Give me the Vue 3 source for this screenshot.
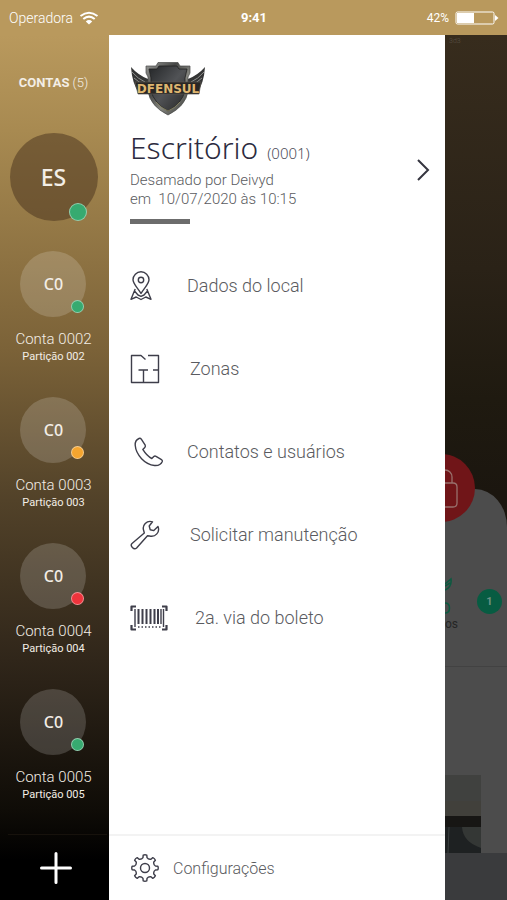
<template>
  <div class="screen">
    <header class="status-bar">
      <div class="carrier">
        <span>Operadora</span>
        <svg class="wifi" viewBox="0 0 20 14" aria-hidden="true">
          <path d="M1.5 5 Q10 -1.6 18.5 5" />
          <path d="M4.3 8 Q10 3.2 15.7 8" />
          <path class="solid" d="M6.8 10.4 Q10 7.6 13.2 10.4 L10 13.4 Z" />
        </svg>
      </div>
      <time class="clock">9:41</time>
      <div class="battery">
        <span>42%</span>
        <svg class="battery-icon" viewBox="0 0 44 14" aria-hidden="true">
          <rect x="1" y="1" width="38" height="12" rx="1.5" />
          <rect class="solid" x="2" y="2" width="17" height="10" />
          <path class="solid" d="M40 4 L43.5 7 L40 10 Z" />
        </svg>
      </div>
    </header>

    <div class="body">
      <nav class="accounts" aria-label="Contas">
        <h2 class="accounts-title"><strong>CONTAS</strong> ({{ accounts.length + 1 }})</h2>
        <button class="avatar current" aria-label="Escritório">
          ES
          <span class="dot green" />
        </button>
        <ul class="account-list">
          <li v-for="a in accounts" :key="a.id">
            <button class="account">
              <span class="avatar">C0<span class="dot" :class="a.state" /></span>
              <span class="account-name">Conta {{ a.id }}</span>
              <span class="account-part">Partição {{ a.part }}</span>
            </button>
          </li>
        </ul>
        <div class="add-row">
          <button class="add" aria-label="Adicionar conta">
            <svg viewBox="0 0 32 32"><path d="M16 1.5 V30.5 M1.5 16 H30.5" /></svg>
          </button>
        </div>
      </nav>

      <main class="drawer">
        <svg class="logo" viewBox="0 0 76 56" role="img" aria-label="Dfensul">
          <defs>
            <linearGradient id="steel" x1="0" y1="0" x2="1" y2="1">
              <stop offset="0" stop-color="#9a9b98" />
              <stop offset="0.35" stop-color="#454645" />
              <stop offset="0.6" stop-color="#858680" />
              <stop offset="1" stop-color="#2d2e2d" />
            </linearGradient>
            <linearGradient id="plate" x1="0" y1="0" x2="1" y2="1">
              <stop offset="0" stop-color="#242628" />
              <stop offset="0.5" stop-color="#515356" />
              <stop offset="1" stop-color="#252525" />
            </linearGradient>
          </defs>
          <path class="wing" d="M1 6 Q8 14 18 18 V32 H9 Q2 22 1 6 Z" />
          <path class="wing" d="M75 6 Q68 14 58 18 V32 H67 Q74 22 75 6 Z" />
          <path class="feather" d="M2 11 Q8 18 15 21 M4 17 Q9 22 16 24 M74 11 Q68 18 61 21 M72 17 Q67 22 60 24" />
          <path fill="url(#steel)" stroke="#484947" stroke-width="0.7" d="M16 5 L26 5 L28 1.5 H48 L50 5 L60 5 V12 L58 16 V30 Q56 45 38 54 Q20 45 18 30 V16 L16 12 Z" />
          <path fill="url(#plate)" stroke="#222" stroke-width="0.8" d="M19 8 H27 L29 5 H47 L49 8 H57 L55 17 V30 Q52 42 38 50 Q24 42 21 30 V17 Z" />
          <path fill="none" stroke="#8c8862" stroke-width="0.8" d="M26 41 Q31 47 38 50 Q45 47 50 41" />
          <path fill="#292725" stroke="#5b5750" stroke-width="0.7" d="M5 21 H71 L69 33 H8 Z" />
          <text x="38" y="31.500" text-anchor="middle">DFENSUL</text>
        </svg>

        <button class="site">
          <span class="site-text">
            <span class="site-head">
              <span class="site-name">Escritório</span>
              <span class="site-code">(0001)</span>
            </span>
            <span class="site-info">Desamado por Deivyd<br>em &nbsp;10/07/2020 às 10:15</span>
          </span>
          <svg class="chevron" viewBox="0 0 14 24"><path d="M2 2 L12 12 L2 22" /></svg>
        </button>
        <div class="rule" />

        <ul class="menu">
          <li>
            <a href="#" class="menu-item">
              <span class="icon">
                <svg width="22" height="30" viewBox="0 0 22 30">
                  <path d="M11 22.5 C8 17 3 13 3 8.8 A8 8 0 0 1 19 8.8 C19 13 14 17 11 22.5 Z" />
                  <circle cx="11" cy="9" r="2.7" />
                  <path d="M5.2 18 L1 28.3 L6.2 26 L11 28.5 L15.8 26 L21 28.3 L16.8 18 M4.5 20 L8 24 L11 25.4 L14 24 L17.5 20" />
                </svg>
              </span>
              Dados do local
            </a>
          </li>
          <li>
            <a href="#" class="menu-item">
              <span class="icon wide">
                <svg width="30" height="30" viewBox="0 0 30 30">
                  <path d="M18 1.5 H28.5 V28.5 H1.5 V1.5 H11 L15.5 5.5 M8.5 16 H18 M13.5 16 V28.5 M23 16 H28.5" />
                </svg>
              </span>
              Zonas
            </a>
          </li>
          <li>
            <a href="#" class="menu-item">
              <span class="icon">
                <svg width="34" height="30" viewBox="0 0 34 30">
                  <path d="M9 1.5 C6.5 2.5 5 5 5.2 8.3 C6 18 15 27.5 24.5 28.5 C28 28.8 31 27.5 32.3 24.5 C32.5 23.8 32.2 23 31.5 22.6 L26 19.3 C25.2 18.9 24.4 19 23.8 19.6 L21.8 21.6 C18 19.5 15.5 16.8 12.8 12.4 L14.8 10.4 C15.5 9.7 15.5 9 15.2 8.2 L11.3 2.2 C10.7 1.4 10 1.1 9 1.5 Z" />
                </svg>
              </span>
              Contatos e usuários
            </a>
          </li>
          <li>
            <a href="#" class="menu-item">
              <span class="icon wide">
                <svg width="30" height="30" viewBox="0 0 30 30">
                  <path d="M22.5 1.8 C17 0 11.5 5 13.8 11 L14.3 13 L2 23.5 C-0.3 25.8 3.8 30.3 6.6 28 L17.5 15.8 L19.5 16 C25.5 17.5 30.2 12 28 6.5 L23.8 10.6 L20.2 9.8 L19.2 6 Z" />
                </svg>
              </span>
              Solicitar manutenção
            </a>
          </li>
          <li>
            <a href="#" class="menu-item">
              <span class="icon widest">
                <svg width="38" height="26" viewBox="0 0 38 26">
                  <path class="frame" d="M1.5 6 V1.5 H6 M32 1.5 H36.5 V6 M36.5 20 V24.5 H32 M6 24.5 H1.5 V20" />
                  <path d="M5 4 V22 M33.500 4 V22" />
                  <path class="bars" d="M8.500 4 V19 M12.500 4 V19 M16.500 4 V19 M20.500 4 V19 M24.500 4 V19 M28 4 V19" />
                  <path d="M31 4 V19" />
                  <path stroke-dasharray="1.5 2" d="M8 22 H31" />
                </svg>
              </span>
              2a. via do boleto
            </a>
          </li>
        </ul>

        <footer class="drawer-footer">
          <a href="#" class="settings">
            <svg width="28" height="28" viewBox="0 0 28 28">
              <path :d="gearPath" />
              <circle cx="14" cy="14" r="4.5" />
            </svg>
            Configurações
          </a>
        </footer>
      </main>

      <aside class="backdrop" aria-hidden="true">
        <div class="hero"><span class="hero-note">3d3</span></div>
        <div class="lock">
          <svg width="22" height="40" viewBox="0 0 22 40">
            <path d="M-7 14 V8 A7 7 0 0 1 7 8 V14 M-12 14 H8 Q12 14 12 18 V34 Q12 38 8 38 H-12" />
          </svg>
        </div>
        <div class="sheet">
          <div class="tile">
            <div class="tile-label">
              <svg width="8" height="38" viewBox="0 0 8 38">
                <path d="M0 7 L6 2 Q7 10 0 13 M0 9 L5 6 M0 26 Q4.500 26 4.500 31 Q4.500 36 0 36" />
              </svg>
              <span>os</span>
            </div>
            <span class="count">1</span>
          </div>
          <svg class="photo" viewBox="0 0 36 78" preserveAspectRatio="none">
            <rect width="36" height="78" fill="#40413f" />
            <rect y="26" width="36" height="15" fill="#41403b" />
            <rect y="41" width="36" height="11" fill="#171614" />
            <rect y="52" width="36" height="26" fill="#1e2122" />
            <path d="M17 52 H36 V73 Q18 67 17 52 Z" fill="#343735" />
            <path d="M4 52 L3 78" stroke="#3b4040" />
          </svg>
        </div>
        <div class="tabbar" />
      </aside>
    </div>
  </div>
</template>

<script setup>
const accounts = [
  { id: '0002', part: '002', state: 'green' },
  { id: '0003', part: '003', state: 'orange' },
  { id: '0004', part: '004', state: 'red' },
  { id: '0005', part: '005', state: 'green' },
]

// 8 teeth, rounded by the stroke joins
const TEETH = 8
const gearPath = (() => {
  const at = (r, deg) => {
    const a = (deg * Math.PI) / 180
    return `${(14 + r * Math.sin(a)).toFixed(2)} ${(14 - r * Math.cos(a)).toFixed(2)}`
  }
  let d = ''
  for (let i = 0; i < TEETH; i++) {
    const c = (i * 360) / TEETH
    d += `${i ? 'L' : 'M'}${at(10.6, c - 11)} L${at(13, c - 8)} Q${at(13.6, c)} ${at(13, c + 8)} L${at(10.6, c + 11)} Q${at(9, c + 22.5)} ${at(10.6, c + 34)} `
  }
  return d + 'Z'
})()
</script>

<style>
body {
  margin: 0;
}
</style>

<style scoped>
.screen {
  min-height: 100vh;
  display: flex;
  flex-direction: column;
  font-family: Roboto, "Liberation Sans", sans-serif;
  font-weight: 300;
  background: linear-gradient(#b9995d 0, #b9995d 35px, #a88a51 130px, #7b6238 350px, #524229 500px, #30261a 660px, #0f0c07 810px, #000 860px);
}

button {
  font: inherit;
  color: inherit;
  background: none;
  border: 0;
  padding: 0;
  cursor: pointer;
}
a {
  color: inherit;
  text-decoration: none;
}
ul {
  list-style: none;
  margin: 0;
  padding: 0;
}
svg {
  fill: none;
  display: block;
}

/* Status bar */
.status-bar {
  height: 35px;
  box-sizing: border-box;
  padding: 0 8px 0 9px;
  display: grid;
  grid-template-columns: 1fr auto 1fr;
  align-items: center;
  background: #b9995d;
  color: #fff;
  font-size: 14px;
}
.carrier, .battery {
  display: flex;
  align-items: center;
  gap: 6px;
}
.battery {
  justify-content: flex-end;
  font-size: 12px;
  font-weight: 400;
}
.clock {
  font-size: 13px;
  font-weight: 700;
}
.wifi {
  width: 20px;
  height: 14px;
  stroke: #fff;
  stroke-width: 2;
}
.battery-icon {
  width: 44px;
  height: 14px;
  stroke: #fff;
}
.solid {
  fill: #fff;
  stroke: none;
}

.body {
  flex: 1;
  display: flex;
}

/* Account rail */
.accounts {
  flex: 0 0 109px;
  box-sizing: border-box;
  padding-right: 2px;
  display: flex;
  flex-direction: column;
  align-items: center;
  color: #f3eee6;
}
.accounts-title {
  margin: 0;
  padding: 38px 0 40px;
  font-size: 13px;
  line-height: 20px;
  font-weight: 300;
}
.accounts-title strong {
  font-weight: 700;
}
.avatar {
  position: relative;
  width: 66px;
  height: 66px;
  border-radius: 50%;
  display: flex;
  align-items: center;
  justify-content: center;
  background: rgba(255,255,255,0.17);
  font-family: "Noto Sans", sans-serif;
  font-size: 16px;
  font-weight: 500;
}
.avatar.current {
  width: 88px;
  height: 88px;
  background: rgba(70,48,28,0.5);
  font-size: 23px;
  margin-bottom: 30px;
}
.dot {
  position: absolute;
  right: 2px;
  bottom: 4px;
  width: 11px;
  height: 11px;
  border-radius: 50%;
  border: 1px solid rgba(255,255,255,0.45);
}
.current .dot {
  width: 16px;
  height: 16px;
  right: 11px;
  bottom: 0;
}
.green { background: #37aa70; }
.orange { background: #f5a52f; }
.red { background: #ef343c; }

.account {
  height: 146px;
  display: flex;
  flex-direction: column;
  align-items: center;
}
.account-name {
  margin-top: 12px;
  font-size: 15px;
  line-height: 20px;
}
.account-part {
  font-size: 11px;
  line-height: 16px;
  font-weight: 400;
}
.account-list li:last-child .account {
  height: auto;
}
.add-row {
  margin-top: auto;
  align-self: stretch;
  height: 66px;
  box-sizing: border-box;
  margin-left: 8px;
  padding-right: 4px;
  border-top: 1px solid #17120c;
  display: flex;
  align-items: center;
  justify-content: center;
}
.add svg {
  width: 32px;
  height: 32px;
  stroke: #fff;
  stroke-width: 3;
  stroke-linecap: round;
}

/* Drawer */
.drawer {
  flex: 1;
  display: flex;
  flex-direction: column;
  background: #fff;
  color: #5a5b60;
}
.logo {
  width: 76px;
  height: 56px;
  margin: 26px 0 0 21px;
}
.logo text {
  font: 700 12px "DejaVu Sans", sans-serif;
  fill: #dfb670;
}
.wing {
  fill: #343535;
}
.feather {
  stroke: #8d8e8c;
  stroke-width: 1;
}
.site {
  margin: 13px 15px 0 21px;
  padding-bottom: 8px;
  display: flex;
  align-items: center;
  justify-content: space-between;
  text-align: left;
}
.site-text, .site-info {
  display: block;
}
.site-head {
  display: flex;
  align-items: baseline;
  gap: 9px;
  line-height: 36px;
  font-family: "Noto Sans", sans-serif;
  color: #2c2b40;
}
.site-name {
  font-size: 30px;
}
.site-code {
  font-size: 15px;
  color: #4d4d59;
}
.site-info {
  font-size: 15px;
  line-height: 19px;
}
.chevron {
  width: 14px;
  height: 24px;
  stroke: #35353f;
  stroke-width: 2;
}
.rule {
  width: 60px;
  height: 5px;
  margin: 2px 0 0 21px;
  background: #6c6c6c;
}
.menu {
  margin-top: 20px;
}
.menu-item {
  height: 83px;
  padding-left: 21px;
  display: flex;
  align-items: center;
  font-size: 18px;
}
.icon {
  flex: 0 0 57px;
}
.icon.wide {
  flex-basis: 60px;
}
.icon.widest {
  flex-basis: 65px;
}
.icon svg, .settings svg {
  stroke: #3e3e4a;
  stroke-width: 1.4;
  stroke-linejoin: round;
}
.icon .frame {
  stroke-width: 2.2;
}
.icon .bars {
  stroke-width: 2;
}
.drawer-footer {
  margin-top: auto;
  height: 66px;
  box-sizing: border-box;
  border-top: 2px solid #f3f3f3;
  display: flex;
  align-items: center;
}
.settings {
  padding-left: 22px;
  display: flex;
  align-items: center;
  gap: 14px;
  font-size: 16px;
}

/* Dimmed screen behind the drawer */
.backdrop {
  flex: 0 0 62px;
  position: relative;
  overflow: hidden;
  display: flex;
  flex-direction: column;
  background: linear-gradient(#372c1d, #2a2217 27%, #1f1a10 42%, #1b160f 53%);
}
.hero {
  flex: 0 0 454px;
}
.hero-note {
  display: block;
  padding: 2px 4px;
  font-size: 7px;
  line-height: 9px;
  color: #5a5247;
}
.lock {
  position: absolute;
  top: 419px;
  left: -38px;
  width: 68px;
  height: 68px;
  border-radius: 50%;
  background: #701518;
}
.lock svg {
  margin: 15px 0 0 38px;
  overflow: visible;
  stroke: #98706c;
  stroke-width: 1.3;
}
.sheet {
  flex: 1;
  display: flex;
  flex-direction: column;
  background: #4c4c4c;
  border-top-right-radius: 32px 38px;
}
.tile {
  flex: 0 0 178px;
  box-sizing: border-box;
  padding: 88px 5px 0 0;
  display: flex;
  justify-content: space-between;
  border-bottom: 1px solid #424242;
}
.tile-label {
  font-size: 12px;
  line-height: 18px;
  font-weight: 400;
  color: #252525;
}
.tile-label svg {
  stroke: #0b5a40;
  stroke-width: 1.5;
}
.count {
  width: 25px;
  height: 25px;
  margin-top: 12px;
  border-radius: 50%;
  background: #075c42;
  color: #6c9183;
  font-size: 11px;
  font-weight: 700;
  line-height: 25px;
  text-align: center;
}
.photo {
  width: 36px;
  height: 78px;
  margin-top: auto;
}
.tabbar {
  flex: 0 0 47px;
  background: #3a3b3d;
}
</style>
